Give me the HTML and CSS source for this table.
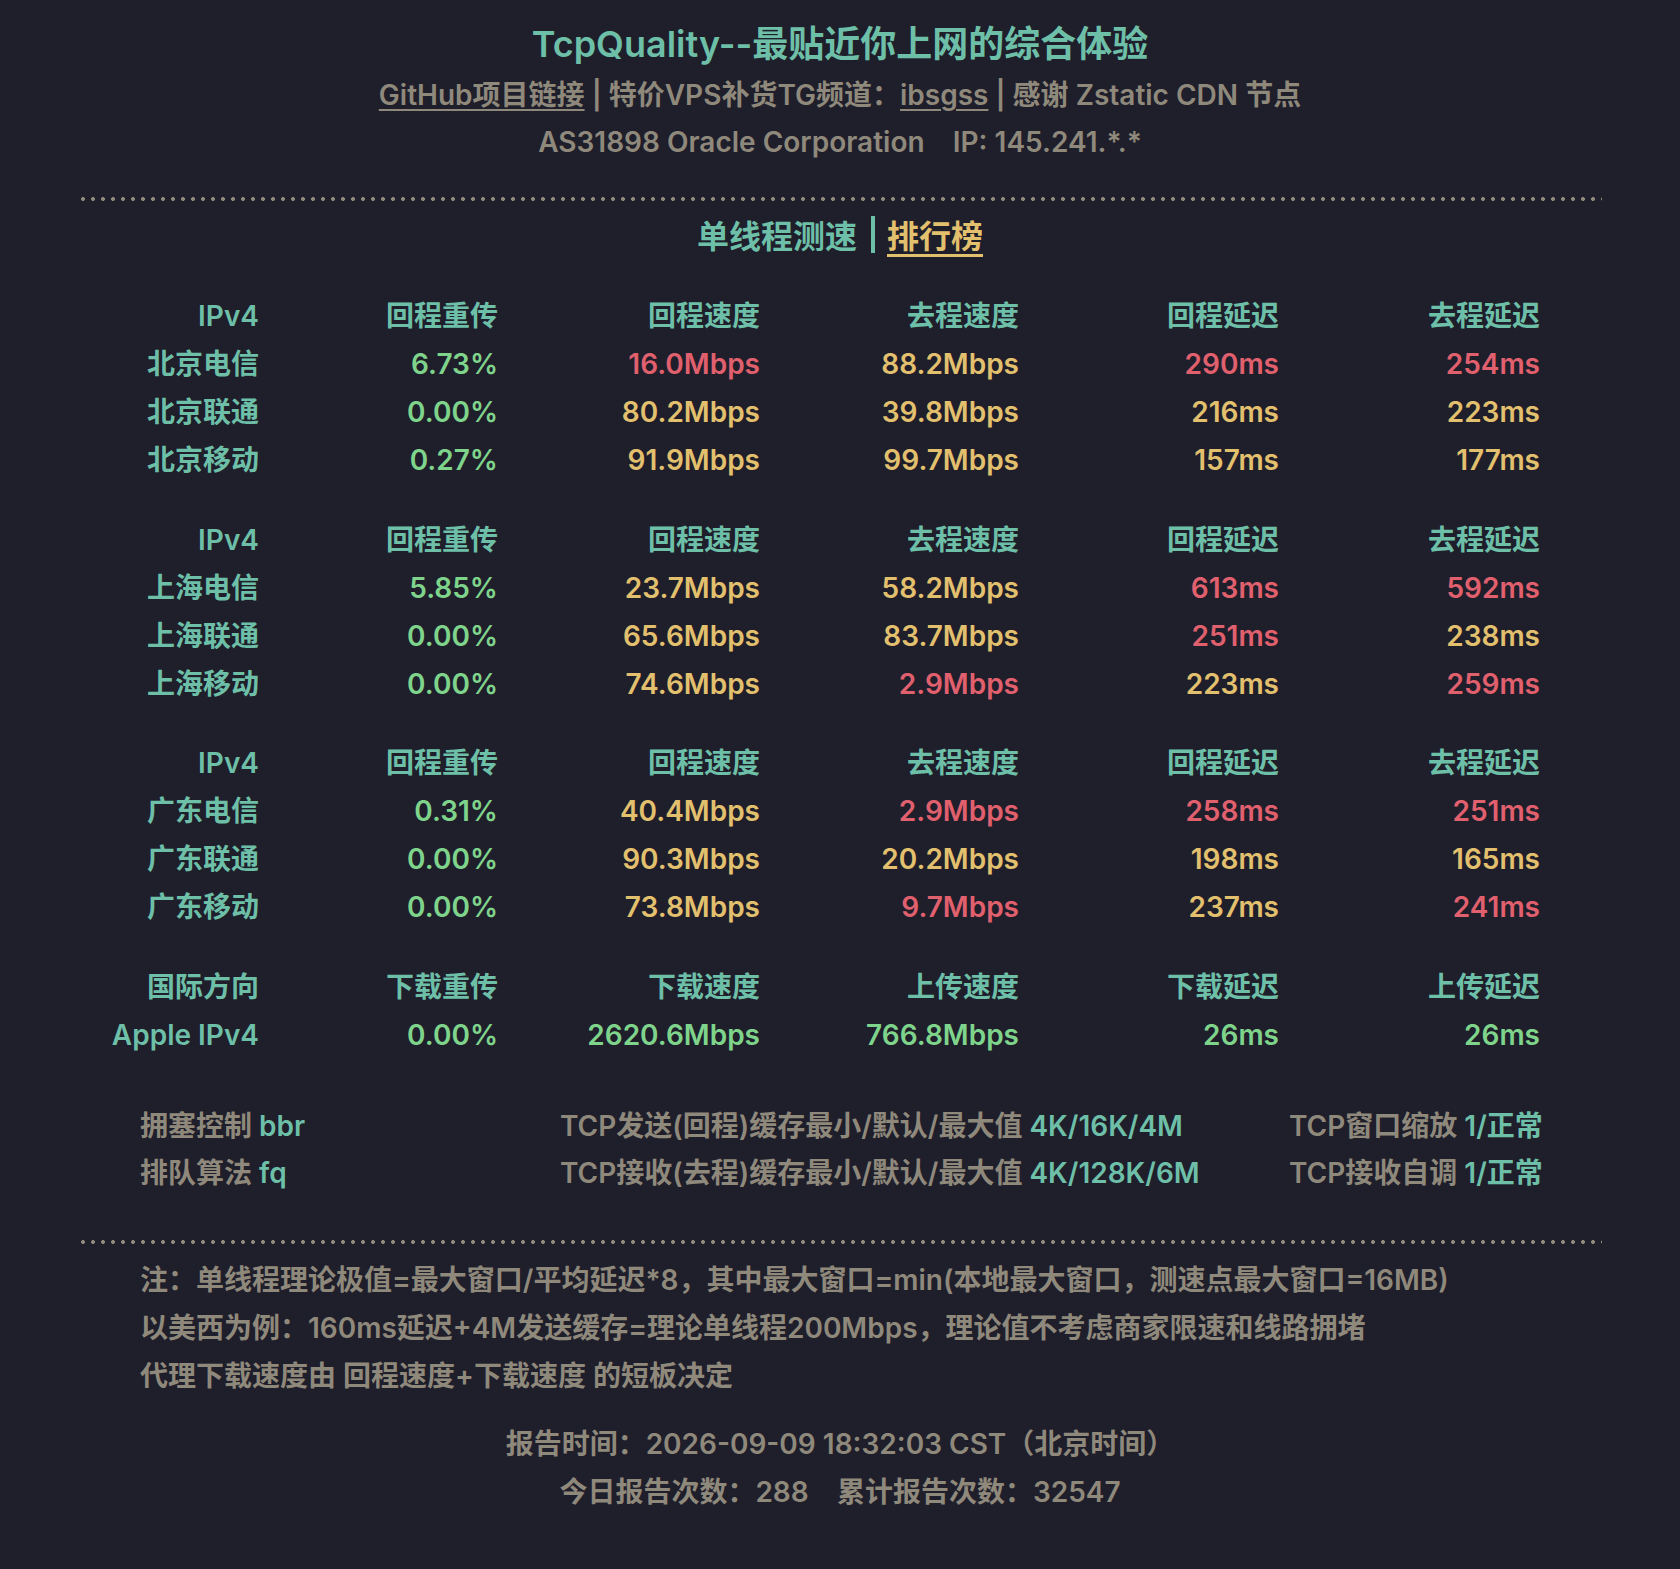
FILE: index.html
```html
<!DOCTYPE html>
<html lang="zh-CN">
<head>
<meta charset="utf-8">
<title>TcpQuality</title>
<link rel="stylesheet" href="styles.css">
</head>
<body>
<div class="page">
  <header class="head">
    <h1 class="title">TcpQuality--最贴近你上网的综合体验</h1>
    <div class="links"><a class="ul">GitHub项目链接</a> | 特价VPS补货TG频道：<a class="ul">ibsgss</a> | 感谢 Zstatic CDN 节点</div>
    <div class="asn">AS31898 Oracle Corporation&nbsp;&nbsp;&nbsp;&nbsp;IP: 145.241.*.*</div>
  </header>
  <div class="dots"></div>
  <div class="tabs"><span class="tab-a">单线程测速</span><span class="bar"></span><a class="tab-b">排行榜</a></div>

  <div class="grid first">
    <div class="h">IPv4</div><div class="h">回程重传</div><div class="h">回程速度</div><div class="h">去程速度</div><div class="h">回程延迟</div><div class="h">去程延迟</div>
    <div class="h">北京电信</div><div class="g">6.73%</div><div class="r">16.0Mbps</div><div class="y">88.2Mbps</div><div class="r">290ms</div><div class="r">254ms</div>
    <div class="h">北京联通</div><div class="g">0.00%</div><div class="y">80.2Mbps</div><div class="y">39.8Mbps</div><div class="y">216ms</div><div class="y">223ms</div>
    <div class="h">北京移动</div><div class="g">0.27%</div><div class="y">91.9Mbps</div><div class="y">99.7Mbps</div><div class="y">157ms</div><div class="y">177ms</div>
  </div>

  <div class="grid">
    <div class="h">IPv4</div><div class="h">回程重传</div><div class="h">回程速度</div><div class="h">去程速度</div><div class="h">回程延迟</div><div class="h">去程延迟</div>
    <div class="h">上海电信</div><div class="g">5.85%</div><div class="y">23.7Mbps</div><div class="y">58.2Mbps</div><div class="r">613ms</div><div class="r">592ms</div>
    <div class="h">上海联通</div><div class="g">0.00%</div><div class="y">65.6Mbps</div><div class="y">83.7Mbps</div><div class="r">251ms</div><div class="y">238ms</div>
    <div class="h">上海移动</div><div class="g">0.00%</div><div class="y">74.6Mbps</div><div class="r">2.9Mbps</div><div class="y">223ms</div><div class="r">259ms</div>
  </div>

  <div class="grid">
    <div class="h">IPv4</div><div class="h">回程重传</div><div class="h">回程速度</div><div class="h">去程速度</div><div class="h">回程延迟</div><div class="h">去程延迟</div>
    <div class="h">广东电信</div><div class="g">0.31%</div><div class="y">40.4Mbps</div><div class="r">2.9Mbps</div><div class="r">258ms</div><div class="r">251ms</div>
    <div class="h">广东联通</div><div class="g">0.00%</div><div class="y">90.3Mbps</div><div class="y">20.2Mbps</div><div class="y">198ms</div><div class="y">165ms</div>
    <div class="h">广东移动</div><div class="g">0.00%</div><div class="y">73.8Mbps</div><div class="r">9.7Mbps</div><div class="y">237ms</div><div class="r">241ms</div>
  </div>

  <div class="grid">
    <div class="h">国际方向</div><div class="h">下载重传</div><div class="h">下载速度</div><div class="h">上传速度</div><div class="h">下载延迟</div><div class="h">上传延迟</div>
    <div class="h">Apple IPv4</div><div class="g">0.00%</div><div class="g">2620.6Mbps</div><div class="g">766.8Mbps</div><div class="g">26ms</div><div class="g">26ms</div>
  </div>

  <div class="info">
    <div>拥塞控制 <span class="t">bbr</span></div>
    <div>TCP发送(回程)缓存最小/默认/最大值 <span class="t">4K/16K/4M</span></div>
    <div>TCP窗口缩放 <span class="t">1/正常</span></div>
    <div>排队算法 <span class="t">fq</span></div>
    <div>TCP接收(去程)缓存最小/默认/最大值 <span class="t">4K/128K/6M</span></div>
    <div>TCP接收自调 <span class="t">1/正常</span></div>
  </div>

  <div class="dots dots2"></div>

  <div class="notes">
    <div>注：单线程理论极值=最大窗口/平均延迟*8，其中最大窗口=min(本地最大窗口，测速点最大窗口=16MB)</div>
    <div>以美西为例：160ms延迟+4M发送缓存=理论单线程200Mbps，理论值不考虑商家限速和线路拥堵</div>
    <div>代理下载速度由 回程速度+下载速度 的短板决定</div>
  </div>

  <footer class="foot">
    <div>报告时间：2026-09-09 18:32:03 CST（北京时间）</div>
    <div>今日报告次数：288&nbsp;&nbsp;&nbsp;&nbsp;累计报告次数：32547</div>
  </footer>
</div>
</body>
</html>
```

FILE: styles.css
```css
html, body {
  margin: 0;
  padding: 0;
  background: #1f1e2b;
}
body {
  font-family: Inter, "Noto Sans CJK SC", sans-serif;
  font-weight: 600;
  color: #8f897c;
  font-size: 28px;
}
.page {
  width: 1680px;
  height: 1569px;
  box-sizing: border-box;
  padding-top: 19px;
}
.head {
  text-align: center;
}
.title {
  margin: 0;
  font-size: 36px;
  line-height: 50px;
  font-weight: 600;
  color: #6dbfa8;
}
.links {
  margin-top: 2px;
  line-height: 48px;
}
.asn {
  line-height: 46px;
}
.ul {
  text-decoration: underline;
  text-underline-offset: 4px;
  text-decoration-thickness: 2px;
}
.dots {
  margin: 32px 78px 0 78px;
  height: 4px;
  background-image: radial-gradient(circle, #8f897c 1.8px, transparent 2.2px);
  background-size: 10px 4px;
  background-repeat: repeat-x;
}
.tabs {
  display: flex;
  justify-content: center;
  align-items: center;
  margin-top: 10px;
  height: 46px;
  font-size: 32px;
}
.tab-a {
  color: #6dbfa8;
}
.bar {
  width: 4px;
  height: 37px;
  background: #6dbfa8;
  margin: 0 12px 0 14px;
}
.tab-b {
  color: #e2c06e;
  text-decoration: underline;
  text-underline-offset: 6px;
  text-decoration-thickness: 3px;
}
.grid {
  display: grid;
  grid-template-columns: 159px 239px 262px 259px 260px 261px;
  grid-auto-rows: 48px;
  padding-left: 100px;
  margin-top: 31.5px;
  line-height: 48px;
  text-align: right;
  white-space: nowrap;
}
.grid.first {
  margin-top: 35px;
}
.h { color: #6dbfa8; }
.g { color: #7fd48c; }
.y { color: #e2c06e; }
.r { color: #e0606e; }
.t { color: #6dbfa8; }
.info {
  display: grid;
  grid-template-columns: 420px 729px auto;
  grid-auto-rows: 47px;
  line-height: 47px;
  padding-left: 140px;
  margin-top: 44px;
  white-space: nowrap;
}
.dots2 {
  margin-top: 43px;
}
.notes {
  padding-left: 140px;
  margin-top: 12px;
  line-height: 48px;
  white-space: nowrap;
}
.foot {
  text-align: center;
  margin-top: 20px;
  line-height: 48px;
}
```
